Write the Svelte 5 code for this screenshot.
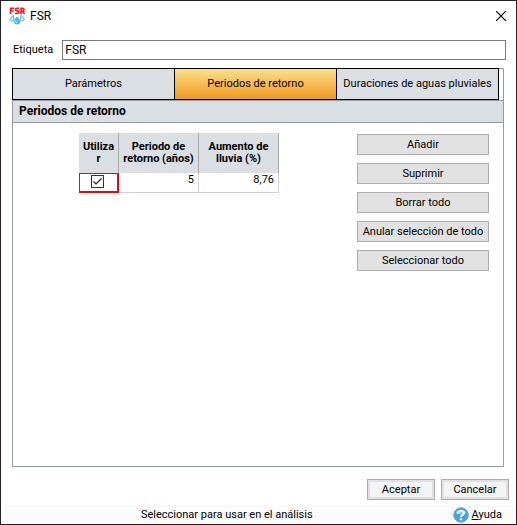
<script>
	let label = $state('FSR');
	let active = $state(1);
	let rows = $state([{ use: true, period: '5', increase: '8,76' }]);

	const tabs = ['Parámetros', 'Periodos de retorno', 'Duraciones de aguas pluviales'];

	function addRow() {
		rows.push({ use: false, period: '', increase: '' });
	}

	function removeRow() {
		rows.pop();
	}

	function clearRows() {
		rows = [];
	}

	function setAll(value) {
		rows.forEach((row) => (row.use = value));
	}
</script>

<div class="dialog">
	<header class="title-bar">
		<svg class="logo" width="16" height="18" viewBox="0 0 16 18" aria-hidden="true">
			<g fill="none" stroke="#f0202a" stroke-width="1.7">
				<path d="M1.6 7V1.3H5.2M1.6 4H4.8" />
				<path d="M10 1.3H7.7Q6.5 1.3 6.5 2.6T7.9 3.9H8.7Q10 4 10 5.1T8.7 6.3H6.1" />
				<path d="M12 7V1.3H13.6Q15 1.3 15 2.7T13.6 4.2H12M13.5 4.2L15.5 7" />
			</g>
			<path d="M4.4 8.2Q1 10.8 1 12.6A1.9 1.9 0 0 0 4.6 13Z" fill="#d9f1fb" stroke="#4fb5e2" />
			<path d="M11.8 8.2Q15.2 10.8 15.2 12.6A1.9 1.9 0 0 1 11.6 13Z" fill="#d9f1fb" stroke="#4fb5e2" />
			<path d="M8.1 9.4Q4.6 12.7 4.8 14.5A3.3 3 0 0 0 11.4 14.5Q11.6 12.7 8.1 9.4Z" fill="#4fb9e6" />
			<path d="M6.4 13.6Q6.4 15.6 8 15.8" fill="none" stroke="#d9f1fb" />
		</svg>
		<h1>FSR</h1>
		<button class="close" aria-label="Cerrar">
			<svg width="10" height="10" viewBox="0 0 10 10">
				<path d="M0 0L10 10M10 0L0 10" stroke="#000" stroke-width="1.2" />
			</svg>
		</button>
	</header>

	<div class="field">
		<label for="etiqueta">Etiqueta</label>
		<input id="etiqueta" type="text" bind:value={label} />
	</div>

	<main class="panel">
		<div class="tabs" role="tablist">
			{#each tabs as tab, i}
				<button role="tab" aria-selected={active === i} class:active={active === i} onclick={() => (active = i)}>
					{tab}
				</button>
			{/each}
		</div>
		<h2>Periodos de retorno</h2>

		<div class="content">
			<table>
				<thead>
					<tr>
						<th class="use">Utilizar</th>
						<th>Periodo de retorno (años)</th>
						<th>Aumento de lluvia (%)</th>
					</tr>
				</thead>
				<tbody>
					{#each rows as row}
						<tr>
							<td class="selected"><input type="checkbox" aria-label="Utilizar" bind:checked={row.use} /></td>
							<td>{row.period}</td>
							<td>{row.increase}</td>
						</tr>
					{/each}
				</tbody>
			</table>

			<div class="actions">
				<button onclick={addRow}>Añadir</button>
				<button onclick={removeRow}>Suprimir</button>
				<button onclick={clearRows}>Borrar todo</button>
				<button onclick={() => setAll(false)}>Anular selección de todo</button>
				<button onclick={() => setAll(true)}>Seleccionar todo</button>
			</div>
		</div>
	</main>

	<div class="buttons">
		<button>Aceptar</button>
		<button>Cancelar</button>
	</div>

	<footer class="status">
		<span class="hint">Seleccionar para usar en el análisis</span>
		<a href="#ayuda">
			<svg width="16" height="16" viewBox="0 0 16 16" aria-hidden="true">
				<circle cx="8" cy="8" r="7.2" fill="#3ea6dd" stroke="#5a9fc8" />
				<path d="M2.5 6A6 6 0 0 1 13.5 6Q8 8.5 2.5 6Z" fill="#7cc7ec" />
				<path d="M4.9 6.5Q5 3.9 8 3.9T11 6.2Q11 7.3 9.3 8.1Q8 8.7 8 10" fill="none" stroke="#fff" stroke-width="2" />
				<circle cx="8" cy="12.2" r="1.2" fill="#fff" />
			</svg>
			<span><u>A</u>yuda</span>
		</a>
	</footer>
</div>

<style>
	:global(body) {
		margin: 0;
		background: #fff;
	}

	.dialog {
		display: flex;
		flex-direction: column;
		box-sizing: border-box;
		min-height: 100vh;
		border: 1px solid #202226;
		background: #fff;
		color: #000;
		font-family: Roboto, 'Liberation Sans', sans-serif;
		font-size: 11px;
		line-height: 14px;
	}

	button,
	input {
		box-sizing: border-box;
		margin: 0;
		color: inherit;
		font: inherit;
	}

	.title-bar {
		display: flex;
		align-items: center;
		height: 30px;
		padding: 0 10px 0 8px;
	}

	.logo {
		margin-right: 5px;
	}

	h1 {
		flex: 1;
		margin: 0;
		font-size: 12px;
		font-weight: 400;
	}

	.close {
		display: flex;
		padding: 0;
		border: 0;
		background: none;
	}

	.field {
		display: flex;
		align-items: center;
		gap: 9px;
		padding: 9px 10px 8px 12px;
	}

	.field input {
		flex: 1;
		min-width: 0;
		height: 20px;
		padding: 0 2px;
		border: 1px solid #7a7a7a;
		background: #fff;
		font-size: 12px;
	}

	.panel {
		flex: 1;
		margin: 0 12px 0 11px;
		border: 1px solid #929da3;
	}

	.tabs {
		display: flex;
		margin: -1px 4px 0 -1px;
		border: 1px solid #000;
	}

	.tabs button {
		flex: 1 1 0;
		height: 30px;
		padding: 0;
		border: 0;
		border-left: 1px solid #000;
		background: #dadfe3;
		white-space: nowrap;
	}

	.tabs button:first-child {
		border-left: 0;
	}

	.tabs button.active {
		background: linear-gradient(#fde08b, #f0991f);
	}

	h2 {
		margin: 0;
		padding: 3px 6px 4px;
		border: solid #929da3;
		border-width: 1px 0;
		background: #dadfe3;
		font-size: 12px;
		line-height: 14px;
	}

	.content {
		display: flex;
		justify-content: space-between;
		align-items: flex-start;
		padding: 10px 14px 10px 66px;
	}

	table {
		width: 200px;
		border-collapse: separate;
		border-spacing: 0;
		table-layout: fixed;
	}

	th {
		height: 40px;
		box-sizing: border-box;
		padding: 0 2px;
		border-right: 1px solid #a8a8a8;
		background: #dadfe3;
		line-height: 12px;
		overflow-wrap: anywhere;
	}

	.use {
		width: 40px;
	}

	td {
		height: 20px;
		box-sizing: border-box;
		padding: 0 4px 4px;
		border: solid #d0d0d0;
		border-width: 0 1px 1px 0;
		text-align: right;
		vertical-align: top;
	}

	td.selected {
		padding: 1px 3px 0 0;
		border: 1px solid #f00;
		border-width: 1px 2px 2px 1px;
	}

	td input {
		appearance: none;
		display: block;
		width: 13px;
		height: 13px;
		margin: 0 auto;
		border: 1px solid #333;
		background: #fff;
	}

	td input:checked {
		background: url("data:image/svg+xml,%3Csvg xmlns='http://www.w3.org/2000/svg' viewBox='0 0 11 11'%3E%3Cpath d='M1.5 5.5L4 8L9.5 2.5' fill='none' stroke='%23222' stroke-width='1.2'/%3E%3C/svg%3E");
	}

	.actions {
		display: flex;
		flex-direction: column;
		gap: 8px;
		width: 132px;
		margin-top: 1px;
	}

	.actions button,
	.buttons button {
		height: 21px;
		padding: 0;
		border: 1px solid #adadad;
		background: #e1e1e1;
		white-space: nowrap;
	}

	.buttons {
		display: flex;
		justify-content: flex-end;
		gap: 6px;
		padding: 12px 7px 5px;
	}

	.buttons button {
		width: 68px;
		background: #f4f4f4;
		box-shadow: inset 0 0 0 2px #e1e1e1;
	}

	.status {
		display: flex;
		align-items: center;
		height: 19px;
		padding-right: 14px;
		background: #fbfbfb;
	}

	.hint {
		flex: 1;
		text-align: center;
	}

	.status a {
		display: flex;
		align-items: center;
		gap: 3px;
		color: #000;
		text-decoration: none;
	}
</style>
